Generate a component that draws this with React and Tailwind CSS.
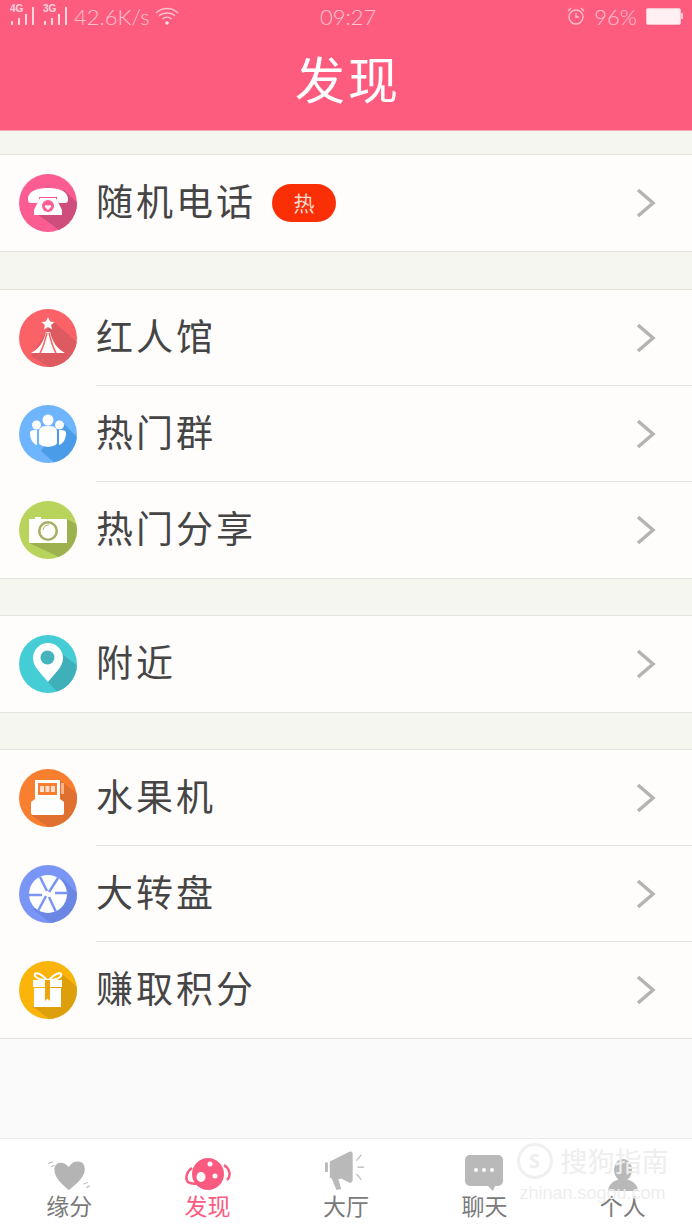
const cjk = '"Noto Sans CJK SC", sans-serif';

function Disc({ color, shadow, points, children }) {
  const clipId = `clip-${color.slice(1)}`;
  return (
    <svg width="58" height="58" viewBox="0 0 58 58" className="shrink-0">
      <defs>
        <clipPath id={clipId}>
          <circle cx="29" cy="29" r="29" />
        </clipPath>
      </defs>
      <circle cx="29" cy="29" r="29" fill={color} />
      <polygon points={points} fill={shadow} clipPath={`url(#${clipId})`} />
      {children}
    </svg>
  );
}

const PhoneIcon = () => (
  <Disc color="#fb5c92" shadow="#cf4d7c" points="45,16 70,40 58,70 40,56 18,40">
    <path d="M9 25c0-9 12-11 20-11s20 2 20 11c0 3-1 4-3 4h-5c-2 0-3-1-3-4v-2H20v2c0 3-1 4-3 4h-5c-2 0-3-1-3-4z" fill="#fff" />
    <path d="M21 24h16l6 12v5H15v-5z" fill="#fff" />
    <circle cx="29" cy="32" r="6" fill="#fb5c92" />
    <path d="M29 36l-3-3c-1-2 2-3 3-1 1-2 4-1 3 1z" fill="#fff" />
  </Disc>
);

const TentIcon = () => (
  <Disc color="#fa6268" shadow="#dc5a60" points="34,12 70,44 50,70 12,47">
    <path d="M29 8l2 4.500 4.500.4-3.400 3 1 4.600-4.100-2.400-4.100 2.400 1-4.600-3.400-3 4.500-.4z" fill="#fff" />
    <path d="M12 44c8-4 13-12 15-21h4c2 9 7 17 15 21z" fill="#fff" />
    <path d="M21 44c3-5 5-12 7-20M37 44c-3-5-5-12-7-20" stroke="#fa6268" strokeWidth="1.500" fill="none" />
  </Disc>
);

const GroupIcon = () => (
  <Disc color="#6fb5fd" shadow="#4a9be8" points="42,16 70,44 50,70 22,46">
    <g fill="#fff">
      <circle cx="29" cy="15" r="5.500" />
      <circle cx="17.500" cy="20" r="4.500" />
      <circle cx="40.500" cy="20" r="4.500" />
      <path d="M20 27c0-5 4-6 9-6s9 1 9 6v11c-2 5-16 5-18 0z" />
      <path d="M11 28c0-3 3-3 7-3v15c-4-1-7-6-7-12zM47 28c0-3-3-3-7-3v15c4-1 7-6 7-12z" />
    </g>
  </Disc>
);

const CameraIcon = () => (
  <Disc color="#b9d45c" shadow="#9db24f" points="48,18 70,30 58,70 36,54 10,42">
    <path d="M10 18h6v-2h6v2h26v24H10z" fill="#fff" />
    <circle cx="29" cy="30" r="10" fill="#a8ae62" />
    <circle cx="29" cy="30" r="7.500" fill="#fff" />
    <path d="M24 29a6 6 0 0 1 6-5" stroke="#a8ae62" strokeWidth="1" fill="none" />
  </Disc>
);

const PinIcon = () => (
  <Disc color="#45cdd6" shadow="#3fb0b9" points="42,18 70,40 50,70 29,47">
    <path d="M29 47C22 38 14 32 14 23a15 15 0 0 1 30 0c0 9-8 15-15 24z" fill="#fff" />
    <circle cx="28.500" cy="22.500" r="7" fill="#45b4bd" />
  </Disc>
);

const SlotIcon = () => (
  <Disc color="#f97f30" shadow="#e07030" points="40,10 70,34 46,70 12,46">
    <path d="M16 11h25v20H16z" fill="#fff" />
    <path d="M19 14h19v12H19z" fill="#f97f30" />
    <path d="M21 17h4v6h-4zM26.500 17h4v6h-4zM32 17h4v6h-4z" fill="#fff" opacity=".75" />
    <path d="M42 14h3v11h-3z" fill="#f9b48a" />
    <path d="M12 33l4-3h25l4 3v11a2 2 0 0 1-2 2H14a2 2 0 0 1-2-2z" fill="#fff" />
  </Disc>
);

const WheelIcon = () => (
  <Disc color="#7996f6" shadow="#6a87e4" points="44,14 70,40 46,70 14,44">
    <circle cx="29" cy="29" r="19" fill="#fff" />
    <g stroke="#7996f6" strokeWidth="2.500">
      <path d="M10 30h13M36 28h13M21 12l7 14M30 32l7 15M39 13l-9 14M27 31l-8 15" />
    </g>
  </Disc>
);

const GiftIcon = () => (
  <Disc color="#fbb40a" shadow="#dd9f0c" points="44,14 70,36 46,70 14,46">
    <path d="M28 19c-5-6-11-8-12-6s2 6 12 6zM30 19c5-6 11-8 12-6s-2 6-12 6z" fill="none" stroke="#fff" strokeWidth="2" />
    <path d="M14 19h29v7H14zM15 27h27v19H15z" fill="#fff" />
    <path d="M26 19h5v21l-2.500-2.500L26 40z" fill="#f1a50d" />
  </Disc>
);

function Row({ icon, label, badge, divider }) {
  return (
    <div className="relative flex h-24 items-center pl-[19px] pr-[36px]">
      {icon}
      <span className="ml-[19px] -translate-y-[3px] text-[37px] leading-none tracking-[3px] text-[#454545]" style={{ fontFamily: cjk }}>{label}</span>
      {badge && (
        <span className="ml-[16px] flex h-[38px] w-16 items-center justify-center rounded-full bg-[#fb2f06] text-[21px] text-[#ffd9cc]" style={{ fontFamily: cjk }}>{badge}</span>
      )}
      <svg className="ml-auto" width="20" height="30" viewBox="0 0 20 30" fill="none" stroke="#b4b4b4" strokeWidth="3.500">
        <path d="M2 2l15 13L2 28" />
      </svg>
      {divider && <div className="absolute bottom-0 left-[96px] right-0 h-px bg-[#e3e3de]" />}
    </div>
  );
}

function Group({ rows }) {
  return (
    <div className="border-y border-[#e3e3dc] bg-[#fffdfb]">
      {rows.map((r, i) => (
        <Row key={r.label} {...r} divider={i < rows.length - 1} />
      ))}
    </div>
  );
}

function Signal({ label, className = '' }) {
  return (
    <div className={`relative h-[20px] w-[26px] ${className}`}>
      <span className="absolute left-0 top-[-3px] text-[10px] font-bold leading-[12px] text-[#ffd5de]" style={{ fontFamily: '"Liberation Sans", sans-serif' }}>{label}</span>
      <svg width="26" height="20" viewBox="0 0 26 20" fill="#ffd5de">
        <rect x="1" y="15" width="2" height="4" />
        <rect x="8" y="12" width="2" height="7" />
        <rect x="15" y="8" width="2" height="11" />
        <rect x="22" y="1" width="2" height="18" />
      </svg>
    </div>
  );
}

function StatusBar() {
  return (
    <div className="flex h-[32px] items-center pl-[10px] pr-[9px] text-[22px] font-light text-[#ffc2cf]" style={{ fontFamily: 'Lato, sans-serif' }}>
      <Signal label="4G" />
      <Signal label="3G" className="ml-[7px]" />
      <span className="ml-[5px] w-[81px] whitespace-nowrap">42.6K/s</span>
      <svg width="24" height="20" viewBox="0 0 24 20" fill="none" stroke="#ffc2cf" strokeWidth="1.300">
        <path d="M1 7c6-6 16-6 22 0M4 10c4-4 12-4 16 0M7.500 13c2.500-2.500 6.500-2.500 9 0" />
        <circle cx="12" cy="17" r="1.800" fill="#ffe0e6" stroke="none" />
      </svg>
      <span className="ml-[141px] w-[80px]">09:27</span>
      <svg className="ml-auto" width="20" height="20" viewBox="0 0 20 20" fill="none" stroke="#ffc2cf" strokeWidth="1.300">
        <circle cx="10" cy="11" r="7" />
        <path d="M10 7v4h3M2 5l3-3M18 5l-3-3" />
      </svg>
      <span className="ml-[8px]">96%</span>
      <div className="ml-[9px] flex items-center">
        <div className="h-[17px] w-[35px] rounded-[2px] border border-[#ffc2cf] bg-[#fff0f3]" />
        <div className="h-[6px] w-[2px] bg-[#ffc2cf]" />
      </div>
    </div>
  );
}

function Tab({ icon, label, active }) {
  return (
    <div className="flex flex-col items-center">
      <div className="flex h-[40px] items-end">{icon}</div>
      <span className={`text-[23px] leading-[28px] ${active ? 'text-[#fb5b80]' : 'text-[#7a7a7a]'}`} style={{ fontFamily: cjk }}>{label}</span>
    </div>
  );
}

const tabs = [
  {
    label: '缘分',
    icon: (
      <svg width="46" height="31" viewBox="0 0 50 36" fill="#b4b4b4">
        <path d="M25 35C18 29 8 21 8 11 8 4 15 1 21 5l4 3c3-5 7-7 12-6 6 1 7 7 6 12-2 8-11 15-18 21z" />
        <path d="M1 4l5-2M4 8l4-2M42 28l5-2M45 32l4-2" stroke="#b4b4b4" strokeWidth="1.200" fill="none" />
      </svg>
    ),
  },
  {
    label: '发现',
    active: true,
    icon: (
      <svg width="46" height="34" viewBox="0 0 46 34" fill="#fb5b80">
        <circle cx="23" cy="17" r="16" />
        <path d="M7 11C1 15-1 24 5 26c3 1 6 1 9 0M39 8c5 3 8 10 3 15" fill="none" stroke="#fb5b80" strokeWidth="2.500" />
        <ellipse cx="16" cy="20" rx="4.500" ry="5" fill="#fff" />
        <circle cx="25" cy="7" r="2.500" fill="#fff" />
        <circle cx="30" cy="19" r="2.500" fill="#fff" />
      </svg>
    ),
  },
  {
    label: '大厅',
    icon: (
      <svg width="46" height="40" viewBox="0 0 46 42" fill="#b9b9b9">
        <path d="M1 12h3v10H1zM6 11l20-10c3-1 4 0 4 3v26c0 3-2 4-4 3l-8-4-3 1 3 10-5 1-5-12-2-1z" />
        <path d="M34 10l5-6M35 17h7M34 24l5 6" stroke="#b9b9b9" strokeWidth="1.300" fill="none" />
      </svg>
    ),
  },
  {
    label: '聊天',
    icon: (
      <svg width="38" height="36" viewBox="0 0 38 36" fill="#b9b9b9">
        <path d="M5 0h28a5 5 0 0 1 5 5v21a5 5 0 0 1-5 5h-3l-2 5-5-5H5a5 5 0 0 1-5-5V5a5 5 0 0 1 5-5z" />
        <circle cx="11" cy="15" r="2" fill="#fff" />
        <circle cx="19" cy="15" r="2" fill="#fff" />
        <circle cx="27" cy="15" r="2" fill="#fff" />
      </svg>
    ),
  },
  {
    label: '个人',
    icon: (
      <svg width="34" height="32" viewBox="0 0 34 32" fill="#b9b9b9">
        <ellipse cx="17" cy="11" rx="9" ry="11" />
        <path d="M2 32c1-8 6-10 12-12h6c6 2 11 4 12 12z" />
      </svg>
    ),
  },
];

export default function App() {
  return (
    <div className="relative flex h-[1230px] w-[692px] flex-col overflow-hidden bg-[#fafafa]">
      <header className="h-[131px] shrink-0 border-b border-[#f2a6b6] bg-[#fe5c7f]">
        <StatusBar />
        <h1 className="mt-[10px] pl-[4px] text-center text-[50px] leading-[70px] tracking-[3px] text-white" style={{ fontFamily: cjk }}>发现</h1>
      </header>

      <div className="flex-1">
        <div className="bg-[#f5f6ef] pt-[23px]">
          <Group rows={[{ icon: <PhoneIcon />, label: '随机电话', badge: '热' }]} />
          <div className="h-[37px]" />
          <Group rows={[
            { icon: <TentIcon />, label: '红人馆' },
            { icon: <GroupIcon />, label: '热门群' },
            { icon: <CameraIcon />, label: '热门分享' },
          ]} />
          <div className="h-[36px]" />
          <Group rows={[{ icon: <PinIcon />, label: '附近' }]} />
          <div className="h-[36px]" />
          <Group rows={[
            { icon: <SlotIcon />, label: '水果机' },
            { icon: <WheelIcon />, label: '大转盘' },
            { icon: <GiftIcon />, label: '赚取积分' },
          ]} />
        </div>
      </div>

      <nav className="grid h-[92px] shrink-0 grid-cols-5 border-t border-[#ececec] bg-white pt-[12px]">
        {tabs.map((t) => (
          <Tab key={t.label} {...t} />
        ))}
      </nav>

      {/* sogou watermark */}
      <div className="pointer-events-none absolute left-[515px] top-[1141px] flex w-[155px] flex-col items-center text-[#eeeeee]">
        <div className="flex items-center">
          <span className="flex h-[36px] w-[36px] items-center justify-center rounded-full border-[3px] border-[#f0f0f0] text-[20px] font-bold">S</span>
          <span className="ml-[8px] whitespace-nowrap text-[27px] leading-[40px]" style={{ fontFamily: cjk }}>搜狗指南</span>
        </div>
        <span className="mt-[4px] whitespace-nowrap text-[18px] leading-[16px]" style={{ fontFamily: '"Liberation Sans", sans-serif' }}>zhinan.sogou.com</span>
      </div>
    </div>
  );
}
